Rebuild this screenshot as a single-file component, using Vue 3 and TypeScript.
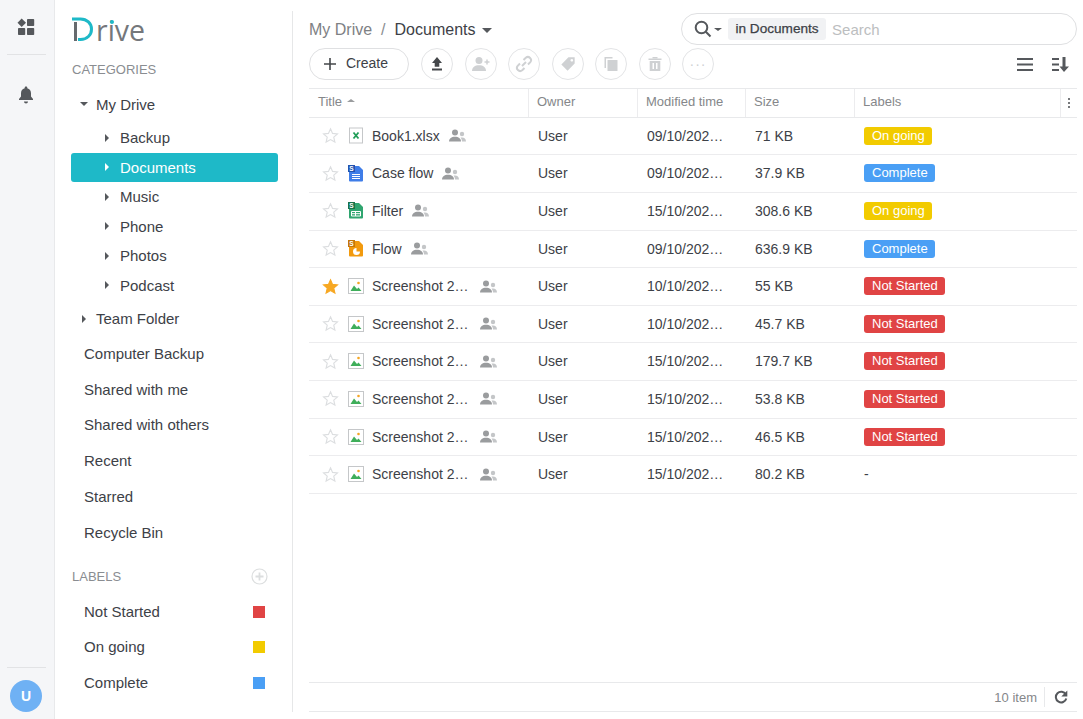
<script setup lang="ts">
type FileKind = 'xlsx' | 'doc' | 'sheet' | 'slide' | 'image';

interface FileRow {
  name: string;
  kind: FileKind;
  starred?: boolean;
  modified: string;
  size: string;
  label: string;
  sharedGap: number;
}

const folders = ['Backup', 'Documents', 'Music', 'Phone', 'Photos', 'Podcast'];
const links = ['Computer Backup', 'Shared with me', 'Shared with others', 'Recent', 'Starred', 'Recycle Bin'];

const labels = [
  { name: 'Not Started', color: '#e04444' },
  { name: 'On going', color: '#f2cb00' },
  { name: 'Complete', color: '#4a9ff5' }
];

const labelClass: Record<string, string> = {
  'On going': 'yellow',
  Complete: 'blue',
  'Not Started': 'red'
};

const files: FileRow[] = [
  { name: 'Book1.xlsx', kind: 'xlsx', modified: '09/10/202…', size: '71 KB', label: 'On going', sharedGap: 9 },
  { name: 'Case flow', kind: 'doc', modified: '09/10/202…', size: '37.9 KB', label: 'Complete', sharedGap: 9 },
  { name: 'Filter', kind: 'sheet', modified: '15/10/202…', size: '308.6 KB', label: 'On going', sharedGap: 9 },
  { name: 'Flow', kind: 'slide', modified: '09/10/202…', size: '636.9 KB', label: 'Complete', sharedGap: 9 },
  { name: 'Screenshot 2…', kind: 'image', starred: true, modified: '10/10/202…', size: '55 KB', label: 'Not Started', sharedGap: 11 },
  { name: 'Screenshot 2…', kind: 'image', modified: '10/10/202…', size: '45.7 KB', label: 'Not Started', sharedGap: 11 },
  { name: 'Screenshot 2…', kind: 'image', modified: '15/10/202…', size: '179.7 KB', label: 'Not Started', sharedGap: 11 },
  { name: 'Screenshot 2…', kind: 'image', modified: '15/10/202…', size: '53.8 KB', label: 'Not Started', sharedGap: 11 },
  { name: 'Screenshot 2…', kind: 'image', modified: '15/10/202…', size: '46.5 KB', label: 'Not Started', sharedGap: 11 },
  { name: 'Screenshot 2…', kind: 'image', modified: '15/10/202…', size: '80.2 KB', label: '-', sharedGap: 11 }
];

const kindColor: Record<string, string> = { doc: '#3f7de8', sheet: '#2fa56f', slide: '#f29a0e' };
const kindTab: Record<string, string> = { doc: '#2354b0', sheet: '#17734b', slide: '#c4770a' };
</script>

<template>
  <div class="app">
    <aside class="rail">
      <div class="rail-top">
        <svg class="rail-icon" width="18" height="18" viewBox="0 0 18 18" fill="#55585c">
          <path d="M4.7 0.5 9 4.7 4.7 9 0.5 4.7Z" />
          <rect x="10" y="1" width="7.2" height="7" rx="0.8" />
          <rect x="1" y="10" width="7.2" height="7" rx="0.8" />
          <rect x="10" y="10" width="7.2" height="7" rx="0.8" />
        </svg>
        <div class="rail-line"></div>
        <svg class="rail-icon bell" width="16" height="18" viewBox="0 0 16 18" fill="#55585c">
          <path d="M8 0.5c.8 0 1.3.5 1.3 1.3v.5c2.400.6 3.700 2.600 3.700 5v3.200l2 2.500v1H1v-1l2-2.500V7.300c0-2.400 1.300-4.400 3.700-5v-.5C6.700 1 7.200.5 8 .5Z" />
          <path d="M6 15.500h4c0 1.100-.9 2-2 2s-2-.9-2-2Z" />
        </svg>
      </div>
      <div class="rail-bottom">
        <div class="rail-line"></div>
        <div class="avatar">U</div>
      </div>
    </aside>

    <nav class="side">
      <div class="logo">
        <svg width="24" height="25" viewBox="0 0 24 25">
          <path d="M0 3H8.500C15 3 19.500 7.500 19.500 13.200S15 23.500 8.500 23.500H6" fill="none" stroke="#1eb9c8" stroke-width="3" />
          <rect x="2" y="6" width="3" height="19" fill="#666a6e" />
        </svg>
        <span class="logo-text">rive</span>
        <i class="logo-dot"></i>
      </div>

      <div class="side-title">CATEGORIES</div>

      <div class="tree-row top first"><i class="caret down"></i>My Drive</div>
      <div class="folders">
        <div v-for="f in folders" :key="f" class="tree-row sub" :class="{ active: f === 'Documents' }">
          <i class="caret right"></i>{{ f }}
        </div>
      </div>
      <div class="tree-row top team"><i class="caret right"></i>Team Folder</div>

      <div class="links">
        <div v-for="l in links" :key="l" class="link">{{ l }}</div>
      </div>

      <div class="labels-head">
        <span class="side-title plain">LABELS</span>
        <svg width="17" height="17" viewBox="0 0 17 17" fill="none" stroke="#dcdedf" stroke-width="1.200">
          <circle cx="8.500" cy="8.500" r="7.500" />
          <path d="M8.500 4.500v8M4.500 8.500h8" stroke-width="1.800" />
        </svg>
      </div>
      <div v-for="l in labels" :key="l.name" class="label-row">
        <span>{{ l.name }}</span>
        <i class="swatch" :style="{ backgroundColor: l.color }"></i>
      </div>
    </nav>

    <main class="main">
      <header class="top-bar">
        <div class="crumbs">
          <span class="crumb-root">My Drive</span>
          <span class="crumb-sep">/</span>
          <span class="crumb-cur">Documents</span>
          <i class="mini-caret"></i>
        </div>
        <div class="search">
          <svg width="18" height="18" viewBox="0 0 18 18" fill="none" stroke="#55585c" stroke-width="2">
            <circle cx="7.500" cy="7.500" r="5.800" />
            <path d="M11.800 11.800 16.500 16.500" />
          </svg>
          <i class="mini-caret small"></i>
          <span class="scope">in Documents</span>
          <span class="placeholder">Search</span>
        </div>
      </header>

      <div class="toolbar">
        <button class="create">
          <svg width="12" height="12" viewBox="0 0 12 12" stroke="#44474a" stroke-width="1.600"><path d="M6 0v12M0 6h12" /></svg>
          <span class="create-text">Create</span>
        </button>
        <button class="round on">
          <svg width="16" height="16" viewBox="0 0 16 16" fill="#44474a"><path d="M8 1 13 7H10.300V10.800H5.700V7H3Z" /><rect x="3" y="12.500" width="10" height="2" /></svg>
        </button>
        <button class="round">
          <svg width="20" height="16" viewBox="0 0 20 16" fill="#cfd1d3"><circle cx="8" cy="4.500" r="3.500" /><path d="M1 15c0-3.800 3-5.800 7-5.800s7 2 7 5.800Z" /><path d="M16 3.500v5M13.500 6h5" stroke="#cfd1d3" stroke-width="1.500" /></svg>
        </button>
        <button class="round">
          <svg width="18" height="18" viewBox="0 0 18 18" fill="none" stroke="#cfd1d3" stroke-width="2"><path d="M7 11 11 7" /><path d="M8.500 5 10.800 2.700a3.200 3.200 0 0 1 4.500 4.500L13 9.500" /><path d="M9.500 13 7.200 15.300a3.200 3.200 0 0 1-4.500-4.500L5 8.500" /></svg>
        </button>
        <button class="round">
          <svg width="16" height="16" viewBox="0 0 18 18" fill="#cfd1d3"><path d="M9.500 1.500H16.500V8.500L8.500 16.500 1.500 9.500ZM13.300 3.300a1.500 1.500 0 1 0 .01 0Z" fill-rule="evenodd" /></svg>
        </button>
        <button class="round">
          <svg width="16" height="16" viewBox="0 0 16 16" fill="#cfd1d3"><path d="M1.500 1H9.500V2.500H3V12H1.500Z" /><rect x="4.500" y="4" width="10" height="11" rx="0.500" /></svg>
        </button>
        <button class="round">
          <svg width="16" height="16" viewBox="0 0 16 16" fill="#cfd1d3"><rect x="1.500" y="2.500" width="13" height="1.500" /><rect x="5.500" y="1" width="5" height="1.500" /><path d="M2.700 5H13.300V15H2.700ZM5.500 7V13H7V7ZM9 7V13H10.500V7Z" fill-rule="evenodd" /></svg>
        </button>
        <button class="round dots">···</button>
        <div class="tool-right">
          <svg width="16" height="13" viewBox="0 0 16 13" fill="#55585c"><rect width="16" height="2" /><rect y="5.500" width="16" height="2" /><rect y="11" width="16" height="2" /></svg>
          <svg width="17" height="15" viewBox="0 0 17 15" fill="#55585c"><rect y="1" width="7" height="2" /><rect y="6.500" width="7" height="2" /><rect y="12" width="7" height="2" /><path d="M10.500 0h3v9.500H17L12 15 7.500 9.500h3Z" /></svg>
        </div>
      </div>

      <section class="table">
        <div class="row head">
          <div class="cell">Title<i class="mini-caret up"></i></div>
          <div class="cell">Owner</div>
          <div class="cell">Modified time</div>
          <div class="cell">Size</div>
          <div class="cell">Labels</div>
          <div class="cell menu"><span class="kebab"><b></b><b></b><b></b></span></div>
        </div>
        <div v-for="(file, i) in files" :key="i" class="row">
          <div class="cell title">
            <svg class="star" width="17" height="17" viewBox="0 0 24 24" :fill="file.starred ? '#f7a823' : 'none'" :stroke="file.starred ? '#f7a823' : '#dcdee0'" stroke-width="1.600">
              <path d="M12 2.500 14.900 9l7 .7-5.300 4.700 1.600 6.900L12 17.700l-6.200 3.600 1.600-6.900L2.100 9.700l7-.7Z" />
            </svg>
            <svg v-if="file.kind === 'xlsx'" class="file" width="16" height="17" viewBox="0 0 16 17">
              <rect x="1.500" y="1" width="13" height="15" fill="#fff" stroke="#c5c7c9" />
              <path d="M5.500 5.500 10.500 11.500M10.500 5.500 5.500 11.500" stroke="#1f9d57" stroke-width="1.800" />
            </svg>
            <svg v-else-if="file.kind === 'image'" class="file" width="16" height="16" viewBox="0 0 16 16">
              <rect x="0.500" y="0.500" width="15" height="15" fill="#fff" stroke="#c5c7c9" />
              <circle cx="10.500" cy="5" r="1.300" fill="#f5a623" />
              <path d="M2.500 13 6 7.500l3 3.500 1.500-1.500 3 3.500Z" fill="#3fae5a" />
            </svg>
            <svg v-else class="file" width="16" height="17" viewBox="0 0 16 17">
              <path d="M1 1h10l4 4v10.500a1 1 0 0 1-1 1H2a1 1 0 0 1-1-1Z" :fill="kindColor[file.kind]" />
              <rect x="0" y="0" width="7" height="7" :fill="kindTab[file.kind]" />
              <text x="3.500" y="5.800" text-anchor="middle" font-size="6.500" font-weight="700" fill="#fff">S</text>
              <path v-if="file.kind === 'doc'" d="M4 9.500h8M4 11.500h8M4 13.500h8" stroke="#fff" stroke-width="1" />
              <path v-else-if="file.kind === 'sheet'" d="M3.500 9.500h9v4.500h-9ZM3.500 11.700h9M7.500 9.500v4.500" fill="none" stroke="#fff" stroke-width="1" />
              <path v-else d="M8.500 8a3.500 3.500 0 1 0 3.500 3.500H8.500Z" fill="#fff" />
            </svg>
            <span class="name">{{ file.name }}</span>
            <svg class="shared" :style="{ marginLeft: file.sharedGap + 'px' }" width="17" height="13" viewBox="0 0 17 13" fill="#9a9c9e">
              <circle cx="6" cy="3.500" r="3" />
              <path d="M0 12.500c0-3 2.500-4.700 6-4.700s6 1.700 6 4.700Z" />
              <circle cx="13" cy="5" r="2.200" fill="#c4c6c8" />
              <path d="M13 12.500h4c0-2.500-1.600-4-4-4-.6 0-1 .1-1.500.2 1 .9 1.500 2.200 1.500 3.800Z" fill="#c4c6c8" />
            </svg>
          </div>
          <div class="cell">User</div>
          <div class="cell">{{ file.modified }}</div>
          <div class="cell">{{ file.size }}</div>
          <div class="cell">
            <span v-if="labelClass[file.label]" class="tag" :class="labelClass[file.label]">{{ file.label }}</span>
            <span v-else>{{ file.label }}</span>
          </div>
          <div class="cell menu"></div>
        </div>
      </section>

      <footer class="foot">
        <span class="count">10 item</span>
        <span class="foot-line"></span>
        <svg width="14" height="14" viewBox="0 0 14 14" fill="none" stroke="#55585c" stroke-width="2">
          <path d="M11.800 4.500A5.300 5.300 0 1 0 12.300 8.500" />
          <path d="M13.300 0.500v6H7.300Z" fill="#55585c" stroke="none" />
        </svg>
      </footer>
    </main>
  </div>
</template>

<style>
html,
body {
  margin: 0;
  background: #fff;
}
</style>

<style scoped>
.app {
  display: flex;
  height: 719px;
  overflow: hidden;
  font-family: 'Liberation Sans', Arial, sans-serif;
  font-size: 14px;
  color: #3d4147;
}

.rail {
  width: 52px;
  padding-right: 2px;
  flex: none;
  background: #f5f6f8;
  border-right: 1px solid #e8e9eb;
  display: flex;
  flex-direction: column;
  justify-content: space-between;
  align-items: center;
}

.rail-top {
  padding-top: 18px;
  display: flex;
  flex-direction: column;
  align-items: center;
}

.rail-icon {
  display: block;
}

.rail-line {
  width: 39px;
  height: 1px;
  background: #e2e3e5;
}

.rail-top .rail-line {
  margin-top: 18px;
}

.bell {
  margin-top: 31px;
}

.rail-bottom {
  display: flex;
  flex-direction: column;
  align-items: center;
  padding-bottom: 7px;
}

.avatar {
  width: 32px;
  height: 32px;
  margin-top: 12px;
  border-radius: 50%;
  background: #6fb1f4;
  color: #fff;
  font-size: 14px;
  font-weight: 700;
  line-height: 32px;
  text-align: center;
}

.side {
  width: 238px;
  flex: none;
  height: 701px;
  margin-top: 11px;
  box-sizing: border-box;
  border-right: 1px solid #e6e7e8;
  padding-left: 16px;
  padding-right: 14px;
}

.logo {
  position: relative;
  display: flex;
  align-items: flex-end;
  height: 30px;
  padding-left: 1px;
}

.logo-text {
  font-family: 'Open Sans', sans-serif;
  font-size: 28.500px;
  line-height: 38px;
  color: #74777b;
  height: 30px;
}

.logo-dot {
  position: absolute;
  left: 39px;
  top: 9px;
  width: 4px;
  height: 4px;
  border-radius: 50%;
  background: #1eb9c8;
}

.side-title {
  font-size: 13px;
  color: #8a8d91;
  margin-top: 21px;
  padding-left: 1px;
  line-height: 16px;
}

.side-title.plain {
  margin-top: 0;
}

.tree-row {
  display: flex;
  align-items: center;
  height: 30px;
  font-size: 15px;
  color: #3d4147;
}

.tree-row.top {
  padding-left: 9px;
}

.tree-row.first {
  margin-top: 11px;
  margin-bottom: 4px;
}

.tree-row.team {
  margin-top: 3px;
}

.folders {
  display: flex;
  flex-direction: column;
}

.tree-row.sub {
  box-sizing: border-box;
  height: 29.600px;
  padding-left: 34px;
  padding-bottom: 0.600px;
  border-radius: 3px;
}

.tree-row.active {
  background: #1eb9c8;
  color: #fff;
}

.caret {
  display: inline-block;
  width: 0;
  height: 0;
  flex: none;
}

.caret.down {
  border-left: 4px solid transparent;
  border-right: 4px solid transparent;
  border-top: 4px solid #55585c;
  margin-right: 8px;
}

.caret.right {
  border-top: 4px solid transparent;
  border-bottom: 4px solid transparent;
  border-left: 4px solid #55585c;
  margin-right: 11px;
}

.tree-row.top .caret.right {
  margin-left: 2px;
  margin-right: 10px;
}

.tree-row.active .caret {
  border-left-color: #fff;
}

.links {
  margin-top: 2.300px;
}

.link,
.label-row {
  font-size: 15px;
  padding-left: 13px;
  color: #3d4147;
}

.link {
  height: 35.800px;
  line-height: 35.800px;
}

.labels-head {
  display: flex;
  align-items: center;
  justify-content: space-between;
  height: 17px;
  margin-top: 17.700px;
  margin-bottom: 8px;
  padding-right: 10px;
}

.label-row {
  display: flex;
  align-items: center;
  justify-content: space-between;
  height: 35.500px;
  padding-right: 13px;
}

.swatch {
  width: 12px;
  height: 12px;
  margin-top: 1px;
}

.main {
  flex: 1;
  min-width: 0;
  height: 701px;
  margin-top: 11px;
  margin-left: 16px;
  margin-right: 6px;
  display: flex;
  flex-direction: column;
}

.top-bar {
  display: flex;
  align-items: center;
  justify-content: space-between;
  height: 32px;
  margin-top: 2px;
}

.crumbs {
  display: flex;
  align-items: center;
  font-size: 16px;
  padding-top: 2px;
}

.crumb-root {
  color: #7e8184;
}

.crumb-sep {
  color: #8a8d91;
  margin: 0 9px;
}

.crumb-cur {
  color: #3d4147;
}

.mini-caret {
  display: inline-block;
  width: 0;
  height: 0;
  margin-left: 7px;
  border-left: 5px solid transparent;
  border-right: 5px solid transparent;
  border-top: 5px solid #55585c;
}

.mini-caret.small {
  margin-left: 2px;
  border-left-width: 4px;
  border-right-width: 4px;
  border-top-width: 3px;
}

.mini-caret.up {
  margin-left: 5px;
  margin-bottom: 3px;
  border-left-width: 4px;
  border-right-width: 4px;
  border-top: 0;
  border-bottom: 3px solid #9a9c9e;
}

.search {
  width: 396px;
  height: 32px;
  box-sizing: border-box;
  border: 1px solid #dfe0e2;
  border-radius: 16px;
  display: flex;
  align-items: center;
  padding-left: 12px;
}

.scope {
  margin-left: 6px;
  height: 22px;
  line-height: 21px;
  padding: 0 7.500px;
  border-radius: 3px;
  background: #f1f2f4;
  font-size: 13.600px;
  -webkit-text-stroke: 0.250px #3d4147;
  color: #3d4147;
}

.placeholder {
  margin-left: 6px;
  color: #bcbec0;
  font-size: 15px;
}

.toolbar {
  display: flex;
  align-items: center;
  gap: 11.500px;
  height: 32px;
  margin-top: 3px;
}

button {
  font-family: inherit;
  background: #fff;
  padding: 0;
  box-sizing: border-box;
  display: flex;
  align-items: center;
  justify-content: center;
}

.create {
  width: 100px;
  height: 32px;
  margin-right: 0.500px;
  border: 1px solid #dfe0e2;
  border-radius: 16px;
  justify-content: flex-start;
  padding-left: 14px;
  gap: 10px;
  font-size: 14px;
  color: #3d4147;
}

.create-text {
  margin-top: -2px;
}

.round {
  width: 32px;
  height: 32px;
  flex: none;
  border-radius: 50%;
  border: 1px solid #e3e4e6;
}

.round.dots {
  color: #cfd1d3;
  font-size: 14px;
  letter-spacing: 1px;
}

.tool-right {
  margin-left: auto;
  display: flex;
  align-items: center;
  gap: 19px;
  padding-right: 8px;
}

.table {
  flex: 1;
  margin-top: 8px;
  font-size: 14px;
}

.row {
  display: grid;
  grid-template-columns: 219px 109px 108px 109px 206px 17px;
  height: 37.600px;
  box-sizing: border-box;
  border-bottom: 1px solid #ececee;
}

.row.head {
  height: 29.750px;
  border-top: 1px solid #e8e9eb;
  border-bottom: 1px solid #e8e9eb;
  font-size: 13px;
  color: #85878a;
}

.row.head .cell {
  padding-bottom: 2px;
}

.row.head .cell + .cell {
  border-left: 1px solid #ececee;
  padding-left: 8px;
}

.cell {
  display: flex;
  align-items: center;
  padding-left: 9px;
  padding-bottom: 0.500px;
  min-width: 0;
  white-space: nowrap;
}

.row:not(.head) .cell + .cell {
  padding-left: 10px;
}

.row.head .cell.menu {
  padding-left: 0;
  padding-bottom: 0;
  justify-content: center;
}

.kebab {
  display: flex;
  flex-direction: column;
  gap: 2px;
}

.kebab b {
  display: block;
  width: 2px;
  height: 2px;
  background: #77797c;
}

.star {
  flex: none;
  margin-left: 4px;
}

.file {
  flex: none;
  margin-left: 9px;
}

.name {
  margin-left: 8px;
}

.shared {
  flex: none;
}

.tag {
  display: inline-block;
  height: 18px;
  line-height: 18px;
  padding: 0 7px 0 8px;
  border-radius: 3px;
  font-size: 13px;
  color: #fff;
}

.tag.yellow {
  background: #f2cb00;
}

.tag.blue {
  background: #4a9ff5;
}

.tag.red {
  background: #e04444;
}

.foot {
  height: 30px;
  box-sizing: border-box;
  border-top: 1px solid #e8e9eb;
  border-bottom: 1px solid #e8e9eb;
  display: flex;
  align-items: center;
  justify-content: flex-end;
  padding-right: 9px;
  font-size: 13px;
  color: #85878a;
}

.foot-line {
  width: 1px;
  height: 20px;
  margin: 0 9px 0 7px;
  background: #e8e9eb;
}
</style>
